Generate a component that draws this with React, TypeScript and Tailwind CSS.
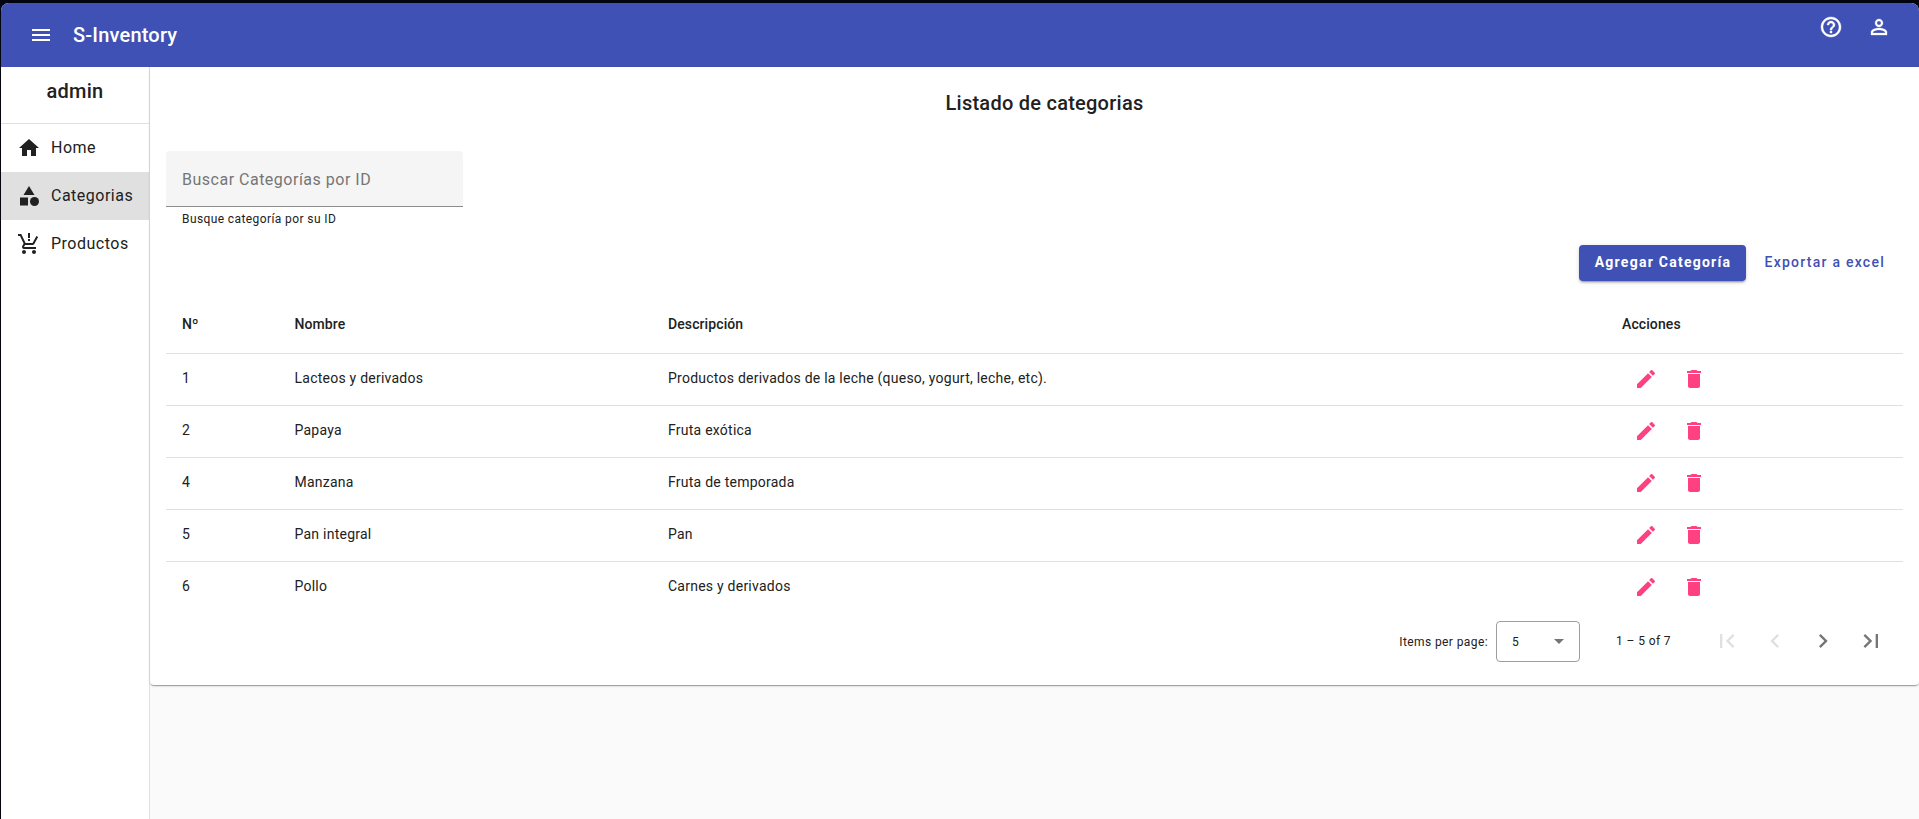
import React from "react";
import {
  MdMenu, MdHome, MdCategory, MdOutlineHelpOutline, MdPersonOutline, MdEdit, MdDelete,
  MdFirstPage, MdChevronLeft, MdChevronRight, MdLastPage,
} from "react-icons/md";

const rows = [
  { id: 1, name: "Lacteos y derivados", desc: "Productos derivados de la leche (queso, yogurt, leche, etc)." },
  { id: 2, name: "Papaya", desc: "Fruta exótica" },
  { id: 4, name: "Manzana", desc: "Fruta de temporada" },
  { id: 5, name: "Pan integral", desc: "Pan" },
  { id: 6, name: "Pollo", desc: "Carnes y derivados" },
];

const grid = "grid grid-cols-[112.5px_373.5px_954px_1fr] items-center";

function CartIcon() {
  return (
    <svg viewBox="0 0 24 24" className="size-6" fill="currentColor">
      <path d="M11 9h2V7h-2zM11 6h2V1h-2zM7 18c-1.100 0-1.990.9-1.990 2S5.900 22 7 22s2-.9 2-2-.9-2-2-2zm10 0c-1.100 0-1.990.9-1.990 2s.89 2 1.990 2 2-.9 2-2-.9-2-2-2zM8.100 13h7.450c.75 0 1.410-.41 1.750-1.030L21.160 4.960 19.420 4l-3.870 7H8.530L4.270 2H1v2h2l3.600 7.590-1.350 2.440C4.520 15.370 5.480 17 7 17h12v-2H7l1.100-2z" />
    </svg>
  );
}

function NavItem({ icon, label, active }: { icon: React.ReactNode; label: string; active?: boolean }) {
  return (
    <a className={`flex h-12 items-center pl-4 text-[#212121] ${active ? "bg-[#e0e0e0]" : ""}`}>
      {icon}
      <span className="ml-[10px] text-base tracking-[0.5px]">{label}</span>
    </a>
  );
}

export default function App() {
  return (
    <div className="h-[819px] overflow-hidden bg-[#020510] pt-[3px] pl-px font-[Roboto,sans-serif] text-[#212121]">
      <div className="flex h-full flex-col overflow-hidden rounded-t-[8px] bg-[#fafafa]">
        <header className="flex h-16 shrink-0 items-center bg-[#3f51b5] pr-7 pl-7 text-white">
          <MdMenu className="size-6" />
          <h1 className="ml-5 text-[20px] font-medium tracking-[0.2px]">S-Inventory</h1>
          <div className="mb-4 ml-auto flex gap-6">
            <MdOutlineHelpOutline className="size-6 stroke-[0.4] [&>path[fill=none]]:stroke-none" />
            <MdPersonOutline className="size-6 stroke-[0.3] [&>path[fill=none]]:stroke-none" />
          </div>
        </header>
        <div className="flex min-h-0 grow">
          <nav className="w-[149px] shrink-0 border-r border-[#e0e0e0] bg-white">
            <div className="flex h-[57px] justify-center border-b border-[#e0e0e0] pt-2 text-[20px] leading-8 font-medium tracking-[0.25px]">admin</div>
            <NavItem icon={<MdHome className="size-6" />} label="Home" />
            <NavItem icon={<MdCategory className="size-6" />} label="Categorias" active />
            <NavItem icon={<CartIcon />} label="Productos" />
          </nav>
          <main className="grow">
            <section className="h-[618px] rounded-b-[4px] bg-white px-4 shadow-[0_2px_1px_-1px_rgba(0,0,0,0.2),0_1px_1px_0_rgba(0,0,0,0.14),0_1px_3px_0_rgba(0,0,0,0.12)]">
              <h2 className="pt-5 pl-[20px] text-center text-[20px] leading-8 font-medium tracking-[0.25px]">Listado de categorias</h2>
              <div className="mt-8 flex h-14 w-[297px] items-center rounded-t-[4px] border-b border-[#8c8c8c] bg-[#f5f5f5] px-4 pt-[2px] text-base tracking-[0.5px] text-[#757575]">Buscar Categorías por ID</div>
              <p className="px-4 pt-[2px] text-xs leading-5 tracking-[0.4px]">Busque categoría por su ID</p>
              <div className="mt-4 flex h-9 items-center justify-end pr-[18px] text-sm">
                <button className="h-9 w-[167px] rounded-[4px] bg-[#3f51b5] pb-[2px] pl-[2px] font-bold tracking-[1.250px] text-white shadow-[0_3px_1px_-2px_rgba(0,0,0,0.2),0_2px_2px_0_rgba(0,0,0,0.14),0_1px_5px_0_rgba(0,0,0,0.12)]">Agregar Categoría</button>
                <button className="ml-[19px] pb-[2px] font-medium tracking-[1.250px] text-[#3f51b5]">Exportar a excel</button>
              </div>
              <div className="mt-[17px] text-sm">
                <div className={`${grid} h-14 border-b border-[#e0e0e0] px-4 pb-[3px] font-medium tracking-[0.1px]`}>
                  <span>Nº</span><span>Nombre</span><span>Descripción</span><span>Acciones</span>
                </div>
                {rows.map((r) => (
                  <div key={r.id} className={`${grid} h-[52px] border-b border-[#e0e0e0] px-4 pb-[3px] tracking-[0.24px] last:border-transparent`}>
                    <span>{r.id}</span><span>{r.name}</span><span>{r.desc}</span>
                    <div className="flex gap-6 pt-[2px] pl-3 text-[#ff4081]">
                      <MdEdit className="size-6" />
                      <MdDelete className="size-6" />
                    </div>
                  </div>
                ))}
              </div>
              <div className="flex h-[55px] items-center justify-end pr-2 text-xs tracking-[0.4px]">
                <span className="pt-px">Items per page:</span>
                <div className="ml-2 flex h-[41px] w-[84px] items-center justify-between rounded-[4px] border border-[#9e9e9e] px-[15px]">
                  <span>5</span>
                  <svg viewBox="0 0 10 5" className="h-[5px] w-[10px] fill-[#757575]"><path d="M0 0h10L5 5z" /></svg>
                </div>
                <span className="ml-9 pb-[2px]">1 – 5 of 7</span>
                <div className="ml-[32px] flex pb-px text-[#757575]">
                  <div className="grid size-12 place-items-center text-[#e0e0e0]"><MdFirstPage className="size-7" /></div>
                  <div className="grid size-12 place-items-center text-[#e0e0e0]"><MdChevronLeft className="size-7" /></div>
                  <div className="grid size-12 place-items-center"><MdChevronRight className="size-7" /></div>
                  <div className="grid size-12 place-items-center"><MdLastPage className="size-7" /></div>
                </div>
              </div>
            </section>
          </main>
        </div>
      </div>
    </div>
  );
}
